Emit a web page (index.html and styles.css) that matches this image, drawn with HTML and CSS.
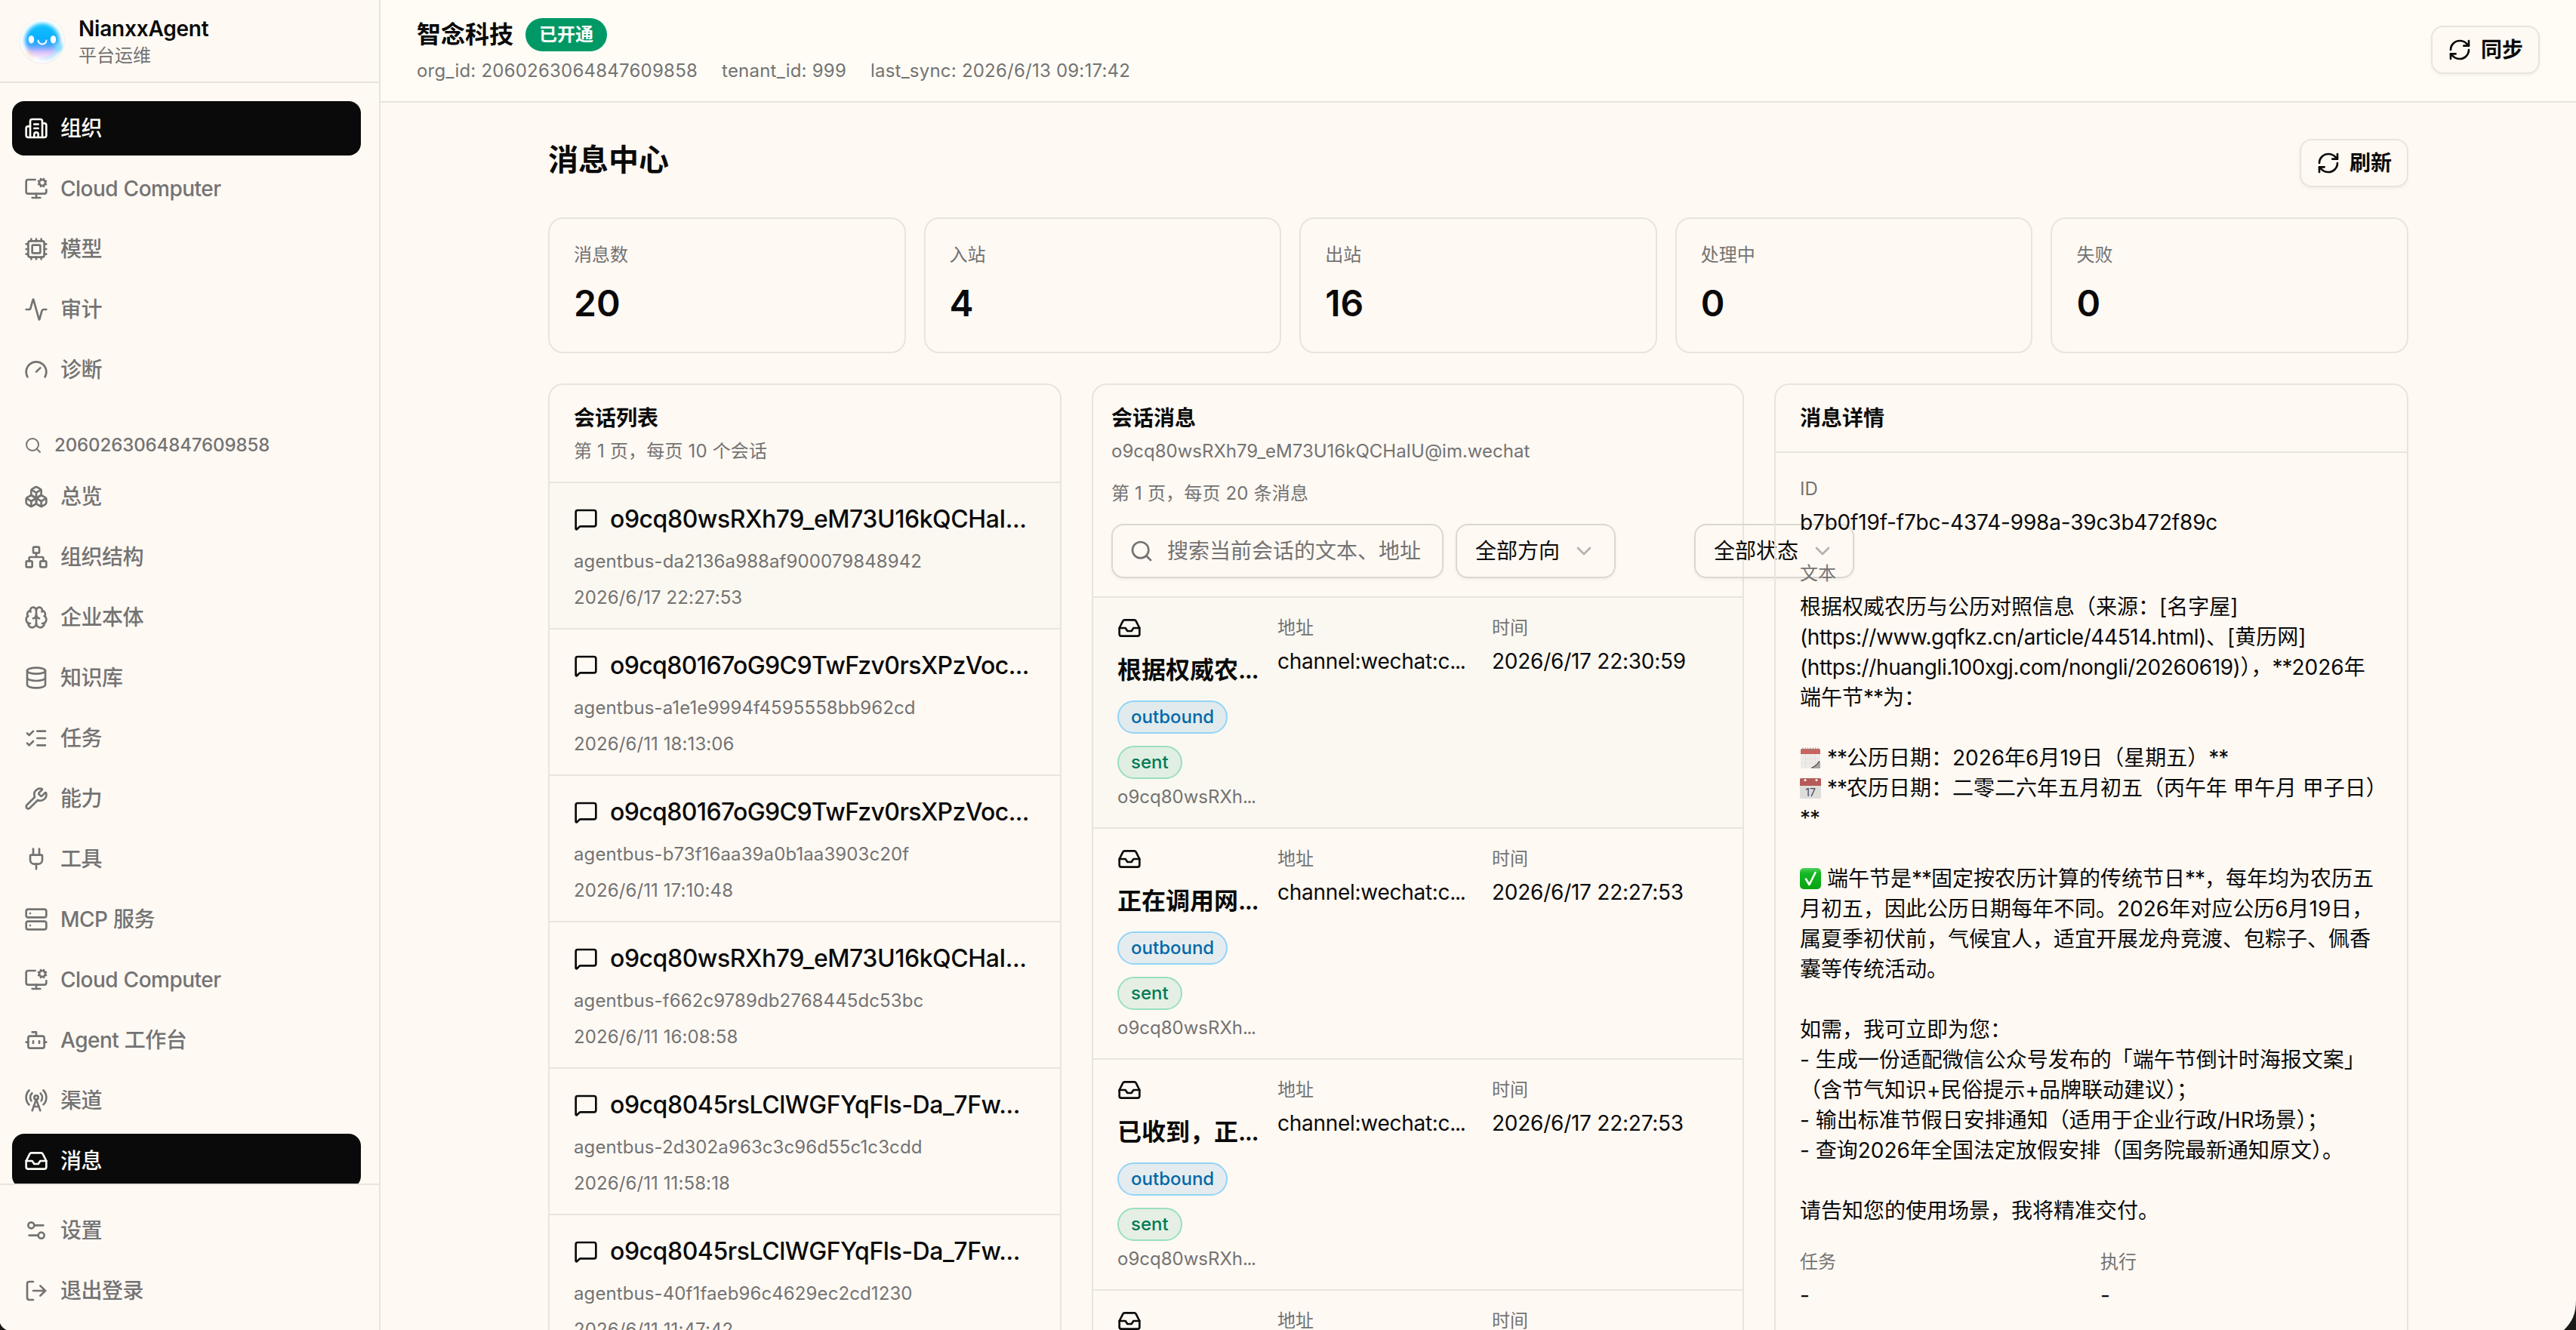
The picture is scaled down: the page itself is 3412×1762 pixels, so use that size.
FILE: index.html
```html
<!DOCTYPE html>
<html lang="zh-CN">
<head>
<meta charset="utf-8">
<title>NianxxAgent 平台运维</title>
<link rel="stylesheet" href="styles.css">
</head>
<body>
<svg class="sprite" aria-hidden="true">
  <symbol id="building" viewBox="0 0 24 24"><path d="M10 12h4M10 8h4M14 21v-3a2 2 0 0 0-4 0v3"/><path d="M6 10H4a2 2 0 0 0-2 2v7a2 2 0 0 0 2 2h16a2 2 0 0 0 2-2V9a2 2 0 0 0-2-2h-2"/><path d="M6 21V5a2 2 0 0 1 2-2h8a2 2 0 0 1 2 2v16"/></symbol>
  <symbol id="monitor" viewBox="0 0 24 24"><path d="M12 17v4"/><path d="m14.305 7.53.923-.382"/><path d="m15.228 4.852-.923-.383"/><path d="m16.852 3.228-.383-.924"/><path d="m16.852 8.772-.383.923"/><path d="m19.148 3.228.383-.924"/><path d="m19.53 9.696-.382-.924"/><path d="m20.772 4.852.924-.383"/><path d="m20.772 7.148.924.383"/><path d="M22 13v2a2 2 0 0 1-2 2H4a2 2 0 0 1-2-2V5a2 2 0 0 1 2-2h7"/><path d="M8 21h8"/><circle cx="18" cy="6" r="3"/></symbol>
  <symbol id="cpu" viewBox="0 0 24 24"><path d="M12 20v2M12 2v2M17 20v2M17 2v2M7 20v2M7 2v2M2 12h2M2 17h2M2 7h2M20 12h2M20 17h2M20 7h2"/><rect x="4" y="4" width="16" height="16" rx="2"/><rect x="8" y="8" width="8" height="8" rx="1"/></symbol>
  <symbol id="activity" viewBox="0 0 24 24"><path d="M22 12h-2.48a2 2 0 0 0-1.93 1.46l-2.35 8.36a.25.25 0 0 1-.48 0L9.24 2.18a.25.25 0 0 0-.48 0l-2.35 8.36A2 2 0 0 1 4.49 12H2"/></symbol>
  <symbol id="gauge" viewBox="0 0 24 24"><path d="m12 14 4-4"/><path d="M3.34 19a10 10 0 1 1 17.32 0"/></symbol>
  <symbol id="search" viewBox="0 0 24 24"><path d="m21 21-4.34-4.34"/><circle cx="11" cy="11" r="8"/></symbol>
  <symbol id="boxes" viewBox="0 0 24 24"><path d="M2.97 12.92A2 2 0 0 0 2 14.63v3.24a2 2 0 0 0 .97 1.71l3 1.8a2 2 0 0 0 2.06 0L12 19v-5.5l-5-3-4.03 2.42Z"/><path d="m7 16.5-4.74-2.85"/><path d="m7 16.5 5-3"/><path d="M7 16.5v5.17"/><path d="M12 13.5V19l3.97 2.38a2 2 0 0 0 2.06 0l3-1.8a2 2 0 0 0 .97-1.71v-3.24a2 2 0 0 0-.97-1.71L17 10.5l-5 3Z"/><path d="m17 16.5-5-3"/><path d="m17 16.5 4.74-2.85"/><path d="M17 16.5v5.17"/><path d="M7.97 4.42A2 2 0 0 0 7 6.13v4.37l5 3 5-3V6.13a2 2 0 0 0-.97-1.71l-3-1.8a2 2 0 0 0-2.06 0l-3 1.8Z"/><path d="M12 8 7.26 5.15"/><path d="m12 8 4.74-2.85"/><path d="M12 13.5V8"/></symbol>
  <symbol id="network" viewBox="0 0 24 24"><rect x="16" y="16" width="6" height="6" rx="1"/><rect x="2" y="16" width="6" height="6" rx="1"/><rect x="9" y="2" width="6" height="6" rx="1"/><path d="M5 16v-3a1 1 0 0 1 1-1h12a1 1 0 0 1 1 1v3"/><path d="M12 12V8"/></symbol>
  <symbol id="brain" viewBox="0 0 24 24"><path d="M12 18V5"/><path d="M15 13a4.17 4.17 0 0 1-3-4 4.17 4.17 0 0 1-3 4"/><path d="M17.598 6.5A3 3 0 1 0 12 5a3 3 0 1 0-5.598 1.5"/><path d="M17.997 5.125a4 4 0 0 1 2.526 5.77"/><path d="M18 18a4 4 0 0 0 2-7.464"/><path d="M19.967 17.483A4 4 0 1 1 12 18a4 4 0 1 1-7.967-.517"/><path d="M6 18a4 4 0 0 1-2-7.464"/><path d="M6.003 5.125a4 4 0 0 0-2.526 5.77"/></symbol>
  <symbol id="database" viewBox="0 0 24 24"><ellipse cx="12" cy="5" rx="9" ry="3"/><path d="M3 5V19A9 3 0 0 0 21 19V5"/><path d="M3 12A9 3 0 0 0 21 12"/></symbol>
  <symbol id="checks" viewBox="0 0 24 24"><path d="M13 5h8M13 12h8M13 19h8"/><path d="m3 17 2 2 4-4"/><path d="m3 7 2 2 4-4"/></symbol>
  <symbol id="wrench" viewBox="0 0 24 24"><path d="M14.7 6.3a1 1 0 0 0 0 1.4l1.6 1.6a1 1 0 0 0 1.4 0l3.106-3.105c.32-.322.863-.22.983.218a6 6 0 0 1-8.259 7.057l-7.91 7.91a1 1 0 0 1-2.999-3l7.91-7.91a6 6 0 0 1 7.057-8.259c.438.12.54.662.219.984z"/></symbol>
  <symbol id="plug" viewBox="0 0 24 24"><path d="M12 22v-5M15 8V2M9 8V2"/><path d="M17 8a1 1 0 0 1 1 1v4a4 4 0 0 1-4 4h-4a4 4 0 0 1-4-4V9a1 1 0 0 1 1-1z"/></symbol>
  <symbol id="server" viewBox="0 0 24 24"><rect x="2" y="2" width="20" height="8" rx="2"/><rect x="2" y="14" width="20" height="8" rx="2"/><path d="M6 6h.01M6 18h.01"/></symbol>
  <symbol id="bot" viewBox="0 0 24 24"><path d="M12 8V4H8"/><rect x="4" y="8" width="16" height="12" rx="2"/><path d="M2 14h2M20 14h2M15 13v2M9 13v2"/></symbol>
  <symbol id="tower" viewBox="0 0 24 24"><path d="M4.9 16.1C1 12.2 1 5.8 4.9 1.9"/><path d="M7.8 4.7a6.14 6.14 0 0 0-.8 7.5"/><circle cx="12" cy="9" r="2"/><path d="M16.2 4.8c2 2 2.26 5.11.8 7.47"/><path d="M19.1 1.9a9.96 9.96 0 0 1 0 14.1"/><path d="M9.5 18h5"/><path d="m8 22 4-11 4 11"/></symbol>
  <symbol id="inbox" viewBox="0 0 24 24"><path d="M22 12h-6l-2 3h-4l-2-3H2"/><path d="M5.45 5.11 2 12v6a2 2 0 0 0 2 2h16a2 2 0 0 0 2-2v-6l-3.45-6.89A2 2 0 0 0 16.76 4H7.24a2 2 0 0 0-1.79 1.11z"/></symbol>
  <symbol id="settings" viewBox="0 0 24 24"><path d="M14 17H5M19 7h-9"/><circle cx="17" cy="17" r="3"/><circle cx="7" cy="7" r="3"/></symbol>
  <symbol id="logout" viewBox="0 0 24 24"><path d="m16 17 5-5-5-5"/><path d="M21 12H9"/><path d="M9 21H5a2 2 0 0 1-2-2V5a2 2 0 0 1 2-2h4"/></symbol>
  <symbol id="refresh" viewBox="0 0 24 24"><path d="M3 12a9 9 0 0 1 9-9 9.75 9.75 0 0 1 6.74 2.74L21 8"/><path d="M21 3v5h-5"/><path d="M21 12a9 9 0 0 1-9 9 9.75 9.75 0 0 1-6.74-2.74L3 16"/><path d="M8 16H3v5"/></symbol>
  <symbol id="message" viewBox="0 0 24 24"><path d="M22 17a2 2 0 0 1-2 2H6.828a2 2 0 0 0-1.414.586l-2.202 2.202A.71.71 0 0 1 2 21.286V5a2 2 0 0 1 2-2h16a2 2 0 0 1 2 2z"/></symbol>
  <symbol id="chevron" viewBox="0 0 24 24"><path d="m6 9 6 6 6-6"/></symbol>
</svg>

<div class="app">
  <aside class="sidebar">
    <header class="brand">
      <svg class="logo" viewBox="0 0 64 64">
        <defs>
          <filter id="soft" x="-30%" y="-30%" width="160%" height="160%"><feGaussianBlur stdDeviation="2.6"/></filter>
          <linearGradient id="face" x1="0" y1="0" x2="0" y2="1">
            <stop offset="0" stop-color="#06c3ff"/><stop offset=".48" stop-color="#0bacff"/><stop offset=".66" stop-color="#4ba4ff"/><stop offset=".84" stop-color="#e6c3fb"/><stop offset="1" stop-color="#fbe9fb"/>
          </linearGradient>
          <clipPath id="disc"><circle cx="32" cy="32" r="29"/></clipPath>
        </defs>
        <circle cx="32" cy="32.4" r="30.4" fill="#f3f1ee"/>
        <circle cx="32" cy="32" r="29" fill="#fff"/>
        <g clip-path="url(#disc)">
          <g filter="url(#soft)">
            <circle cx="36" cy="36" r="21" fill="#a9e8ff"/>
            <circle cx="19" cy="46" r="8" fill="#fbe6c4"/>
            <circle cx="32" cy="32" r="23" fill="url(#face)"/>
            <circle cx="54" cy="41" r="6" fill="#7fdcff"/>
          </g>
        </g>
        <ellipse cx="17.500" cy="30.200" rx="3.700" ry="5.200" fill="#fff"/>
        <ellipse cx="46.500" cy="30.200" rx="3.700" ry="5.200" fill="#fff"/>
        <path d="M26.500 31.500a5.500 5 0 0 0 11 0" fill="none" stroke="#fff" stroke-width="2" stroke-linecap="round"/>
      </svg>
      <div>
        <div class="brand-name">NianxxAgent</div>
        <div class="brand-sub">平台运维</div>
      </div>
    </header>
    <div class="nav-scroll">
      <nav class="nav">
        <a class="nav-item active"><svg class="icon"><use href="#building"/></svg>组织</a>
        <a class="nav-item"><svg class="icon"><use href="#monitor"/></svg>Cloud Computer</a>
        <a class="nav-item"><svg class="icon"><use href="#cpu"/></svg>模型</a>
        <a class="nav-item"><svg class="icon"><use href="#activity"/></svg>审计</a>
        <a class="nav-item"><svg class="icon"><use href="#gauge"/></svg>诊断</a>
      </nav>
      <div class="nav-label"><svg class="icon small"><use href="#search"/></svg>2060263064847609858</div>
      <nav class="nav">
        <a class="nav-item"><svg class="icon"><use href="#boxes"/></svg>总览</a>
        <a class="nav-item"><svg class="icon"><use href="#network"/></svg>组织结构</a>
        <a class="nav-item"><svg class="icon"><use href="#brain"/></svg>企业本体</a>
        <a class="nav-item"><svg class="icon"><use href="#database"/></svg>知识库</a>
        <a class="nav-item"><svg class="icon"><use href="#checks"/></svg>任务</a>
        <a class="nav-item"><svg class="icon"><use href="#wrench"/></svg>能力</a>
        <a class="nav-item"><svg class="icon"><use href="#plug"/></svg>工具</a>
        <a class="nav-item"><svg class="icon"><use href="#server"/></svg>MCP 服务</a>
        <a class="nav-item"><svg class="icon"><use href="#monitor"/></svg>Cloud Computer</a>
        <a class="nav-item"><svg class="icon"><use href="#bot"/></svg>Agent 工作台</a>
        <a class="nav-item"><svg class="icon"><use href="#tower"/></svg>渠道</a>
        <a class="nav-item active"><svg class="icon"><use href="#inbox"/></svg>消息</a>
      </nav>
    </div>
    <footer class="nav side-foot">
      <a class="nav-item"><svg class="icon"><use href="#settings"/></svg>设置</a>
      <a class="nav-item"><svg class="icon"><use href="#logout"/></svg>退出登录</a>
    </footer>
  </aside>

  <div class="main">
    <header class="topbar">
      <div>
        <div class="org"><span class="org-name">智念科技</span><span class="status">已开通</span></div>
        <div class="meta"><span>org_id: 2060263064847609858</span><span>tenant_id: 999</span><span>last_sync: 2026/6/13 09:17:42</span></div>
      </div>
      <button class="btn"><svg class="icon"><use href="#refresh"/></svg>同步</button>
    </header>

    <main class="content">
      <div class="page-head">
        <h1>消息中心</h1>
        <button class="btn"><svg class="icon"><use href="#refresh"/></svg>刷新</button>
      </div>

      <section class="stats">
        <div class="stat"><div class="label">消息数</div><div class="value">20</div></div>
        <div class="stat"><div class="label">入站</div><div class="value">4</div></div>
        <div class="stat"><div class="label">出站</div><div class="value">16</div></div>
        <div class="stat"><div class="label">处理中</div><div class="value">0</div></div>
        <div class="stat"><div class="label">失败</div><div class="value">0</div></div>
      </section>

      <section class="columns">
        <div class="panel">
          <div class="panel-head">
            <h2>会话列表</h2>
            <div class="label loose">第 1 页，每页 10 个会话</div>
          </div>
          <div class="conv selected"><div class="conv-title"><svg class="icon"><use href="#message"/></svg><span>o9cq80wsRXh79_eM73U16kQCHaI...</span></div><div class="label id">agentbus-da2136a988af900079848942</div><div class="label id">2026/6/17 22:27:53</div></div>
          <div class="conv"><div class="conv-title tight"><svg class="icon"><use href="#message"/></svg><span>o9cq80167oG9C9TwFzv0rsXPzVoc...</span></div><div class="label id">agentbus-a1e1e9994f4595558bb962cd</div><div class="label id">2026/6/11 18:13:06</div></div>
          <div class="conv"><div class="conv-title tight"><svg class="icon"><use href="#message"/></svg><span>o9cq80167oG9C9TwFzv0rsXPzVoc...</span></div><div class="label id">agentbus-b73f16aa39a0b1aa3903c20f</div><div class="label id">2026/6/11 17:10:48</div></div>
          <div class="conv"><div class="conv-title"><svg class="icon"><use href="#message"/></svg><span>o9cq80wsRXh79_eM73U16kQCHaI...</span></div><div class="label id">agentbus-f662c9789db2768445dc53bc</div><div class="label id">2026/6/11 16:08:58</div></div>
          <div class="conv"><div class="conv-title"><svg class="icon"><use href="#message"/></svg><span>o9cq8045rsLClWGFYqFls-Da_7Fw...</span></div><div class="label id">agentbus-2d302a963c3c96d55c1c3cdd</div><div class="label id">2026/6/11 11:58:18</div></div>
          <div class="conv"><div class="conv-title"><svg class="icon"><use href="#message"/></svg><span>o9cq8045rsLClWGFYqFls-Da_7Fw...</span></div><div class="label id">agentbus-40f1faeb96c4629ec2cd1230</div><div class="label id">2026/6/11 11:47:42</div></div>
        </div>

        <div class="panel">
          <div class="panel-head filters">
            <h2>会话消息</h2>
            <div class="label">o9cq80wsRXh79_eM73U16kQCHaIU@im.wechat</div>
            <div class="label spaced loose">第 1 页，每页 20 条消息</div>
            <div class="controls">
              <div class="field search"><svg class="icon"><use href="#search"/></svg><span>搜索当前会话的文本、地址</span></div>
              <div class="field select">全部方向<svg class="icon"><use href="#chevron"/></svg></div>
              <div class="field select">全部状态<svg class="icon"><use href="#chevron"/></svg></div>
            </div>
          </div>
          <div class="msg selected">
            <div class="msg-main"><svg class="icon"><use href="#inbox"/></svg><div class="msg-title">根据权威农<span class="dots">...</span></div><span class="tag sky">outbound</span><span class="tag green">sent</span><div class="label">o9cq80wsRXh<span class="dots">...</span></div></div>
            <div><div class="label">地址</div><div class="text addr">channel:wechat:c<span class="dots">...</span></div></div>
            <div><div class="label">时间</div><div class="text time">2026/6/17 22:30:59</div></div>
          </div>
          <div class="msg">
            <div class="msg-main"><svg class="icon"><use href="#inbox"/></svg><div class="msg-title">正在调用网<span class="dots">...</span></div><span class="tag sky">outbound</span><span class="tag green">sent</span><div class="label">o9cq80wsRXh<span class="dots">...</span></div></div>
            <div><div class="label">地址</div><div class="text addr">channel:wechat:c<span class="dots">...</span></div></div>
            <div><div class="label">时间</div><div class="text time">2026/6/17 22:27:53</div></div>
          </div>
          <div class="msg">
            <div class="msg-main"><svg class="icon"><use href="#inbox"/></svg><div class="msg-title">已收到，正<span class="dots">...</span></div><span class="tag sky">outbound</span><span class="tag green">sent</span><div class="label">o9cq80wsRXh<span class="dots">...</span></div></div>
            <div><div class="label">地址</div><div class="text addr">channel:wechat:c<span class="dots">...</span></div></div>
            <div><div class="label">时间</div><div class="text time">2026/6/17 22:27:53</div></div>
          </div>
          <div class="msg">
            <div class="msg-main"><svg class="icon"><use href="#inbox"/></svg></div>
            <div><div class="label">地址</div></div>
            <div><div class="label">时间</div></div>
          </div>
        </div>

        <div class="panel">
          <div class="panel-head"><h2>消息详情</h2></div>
          <div class="detail">
            <div><div class="label">ID</div><div class="text uuid">b7b0f19f-f7bc-4374-998a-39c3b472f89c</div></div>
            <div>
              <div class="label">文本</div>
              <div class="text body">根据权威农历与公历对照信息（来源：[名字屋]
<span class="url">(https://www.gqfkz.cn/article/44514.html)</span>、[黄历网]
<span class="url">(https://huangli.100xgj.com/nongli/20260619)</span>），<b>**</b>2026年
端午节<b>**</b>为：

<svg class="emoji" viewBox="0 0 28 28"><rect x="1" y="2" width="26" height="26" rx="1.500" fill="#eeece9"/><path d="M1 3.500A1.500 1.500 0 0 1 2.500 2h23A1.500 1.500 0 0 1 27 3.500V9H1z" fill="#c96460"/><path d="M4 .5v4M7.300.5v4M10.700.5v4M14 .5v4M17.300.5v4M20.700.5v4M24 .5v4" stroke="#8d8884" stroke-width="1"/><path d="M1 15h26M1 21h26M7.500 9v19M14 9v19M20.500 9v19" stroke="#dddad7" stroke-width=".6"/><path d="M16 28c3-2 7-5 9.500-9.500L27 18v10z" fill="#a7a4a2"/><path d="M15.500 27.500c4-2 8-5 10-9" stroke="#55524f" stroke-width="1.400" fill="none"/></svg> <b>**</b>公历日期：2026年6月19日（星期五）<b>**</b>
<svg class="emoji" viewBox="0 0 28 28"><rect y="1" width="28" height="27" rx="1.500" fill="#dfdddc"/><path d="M0 2.500A1.500 1.500 0 0 1 1.500 1h25A1.500 1.500 0 0 1 28 2.500V11H0z" fill="#b55a58"/><circle cx="7" cy="3.500" r="1.500" fill="#fff"/><circle cx="22" cy="3.500" r="1.500" fill="#fff"/><text x="14" y="24.500" text-anchor="middle" font-size="14" fill="#4a4846">17</text></svg> <b>**</b>农历日期：二零二六年五月初五（丙午年 甲午月 甲子日）
<b>**</b>

<svg class="emoji" viewBox="0 0 28 28"><defs><linearGradient id="ok" x1="0" y1="0" x2="0" y2="1"><stop offset="0" stop-color="#4fd05a"/><stop offset=".25" stop-color="#14b824"/><stop offset="1" stop-color="#07a312"/></linearGradient></defs><rect width="28" height="28" rx="5" fill="url(#ok)"/><path d="M8 14.500 12.500 22 20.500 6" fill="none" stroke="#fff" stroke-width="2.600" stroke-linecap="round" stroke-linejoin="round"/></svg> 端午节是<b>**</b>固定按农历计算的传统节日<b>**</b>，每年均为农历五
月初五，因此公历日期每年不同。2026年对应公历6月19日，
属夏季初伏前，气候宜人，适宜开展龙舟竞渡、包粽子、佩香
囊等传统活动。

如需，我可立即为您：
- 生成一份适配微信公众号发布的「端午节倒计时海报文案」
（含节气知识+民俗提示+品牌联动建议）；
- 输出标准节假日安排通知（适用于企业行政/HR场景）；
- 查询2026年全国法定放假安排（国务院最新通知原文）。

请告知您的使用场景，我将精准交付。</div>
            </div>
            <div class="pair">
              <div><div class="label">任务</div><div class="text">-</div></div>
              <div><div class="label">执行</div><div class="text">-</div></div>
            </div>
          </div>
        </div>
      </section>
    </main>
  </div>
</div>
<svg class="corner left" viewBox="0 0 10 10"><path d="M0 1C1.500 5 4.500 8 8.500 10H0z"/></svg>
<svg class="corner right" viewBox="0 0 40 40"><path d="M40 0C40 19 35 29 24 40H40z"/></svg>
</body>
</html>
```

FILE: styles.css
```css
* { box-sizing: border-box; }

:root {
  --bg: #fff9f3;
  --bg-top: #fffcf5;
  --selected: #fbf8f1;
  --fg: #0a0a0a;
  --muted: #737373;
  --border: #e8e4de;
  --input: #dbd7d1;
}

body {
  margin: 0;
  height: 1762px;
  overflow: hidden;
  background: var(--bg);
  color: var(--fg);
  font-family: Inter, "Noto Sans CJK SC", sans-serif;
  font-size: 28px;
  line-height: 40px;
}

h1, h2 { margin: 0; font-weight: 600; }

.sprite { display: none; }

.icon {
  flex: none;
  display: block;
  width: 32px;
  height: 32px;
  fill: none;
  stroke: currentColor;
  stroke-width: 2;
  stroke-linecap: round;
  stroke-linejoin: round;
}
.icon.small { width: 24px; height: 24px; }

.app { display: flex; height: 1762px; overflow: hidden; }

/* Sidebar */
.sidebar {
  flex: none;
  display: flex;
  flex-direction: column;
  width: 504px;
  border-right: 2px solid var(--border);
}
.brand {
  flex: none;
  display: flex;
  align-items: center;
  gap: 16px;
  height: 110px;
  padding-left: 24px;
  border-bottom: 2px solid var(--border);
}
.logo { width: 64px; height: 64px; }
.brand-name { font-weight: 600; letter-spacing: -.2px; }
.brand-sub { font-size: 24px; line-height: 32px; color: var(--muted); }

.nav-scroll { flex: 1; min-height: 0; overflow: hidden; padding-top: 24px; }
.nav { display: flex; flex-direction: column; gap: 8px; padding: 0 24px 0 16px; }
.nav-item {
  display: flex;
  align-items: center;
  gap: 16px;
  height: 72px;
  padding-left: 16px;
  border-radius: 16px;
  color: var(--muted);
  font-weight: 500;
  letter-spacing: -.5px;
}
.nav-item:lang(zh) { word-spacing: .5px; }
.nav-item.active { background: var(--fg); color: #fffdf6; }
.nav-label {
  display: flex;
  align-items: center;
  gap: 16px;
  margin: 48px 0 16px;
  padding-left: 32px;
  font-size: 24px;
  line-height: 32px;
  font-weight: 500;
  letter-spacing: -.1px;
  color: var(--muted);
}
.side-foot { flex: none; padding-top: 24px; padding-bottom: 16px; border-top: 2px solid var(--border); }

/* Top bar */
.main { flex: 1; min-width: 0; display: flex; flex-direction: column; }
.topbar {
  flex: none;
  display: flex;
  justify-content: space-between;
  align-items: flex-start;
  height: 136px;
  padding: 22px 48px 0;
  background: var(--bg-top);
  border-bottom: 2px solid var(--border);
}
.topbar .btn { margin-top: 12px; }
.org { display: flex; align-items: center; gap: 16px; height: 48px; }
.org-name { font-size: 32px; font-weight: 600; }
.status {
  height: 44px;
  padding: 0 18px;
  border-radius: 22px;
  background: #009966;
  color: #fff;
  font-size: 24px;
  line-height: 44px;
  font-weight: 600;
}
.meta { display: flex; gap: 32px; margin-top: 8px; font-size: 24px; line-height: 32px; letter-spacing: .22px; color: var(--muted); }

.btn {
  display: flex;
  align-items: center;
  gap: 12px;
  height: 64px;
  padding: 0 20px;
  border: 2px solid var(--border);
  border-radius: 16px;
  background: var(--bg);
  box-shadow: 0 2px 4px rgba(0, 0, 0, .05);
  color: var(--fg);
  font: inherit;
  font-weight: 600;
}

/* Page */
.content { flex: 1; min-height: 0; width: 2464px; margin-left: 222px; padding-top: 48px; overflow: hidden; }
.page-head { display: flex; justify-content: space-between; }
h1 { font-size: 40px; line-height: 56px; }

.label { font-size: 24px; line-height: 32px; color: var(--muted); white-space: nowrap; }
.label.id { letter-spacing: .1px; }
.label.loose { letter-spacing: .17px; }
.text { margin-top: 8px; white-space: nowrap; }
.addr { letter-spacing: -.28px; }
.time { letter-spacing: -.25px; }
.uuid { letter-spacing: -.18px; }
.url { letter-spacing: -.4px; }
.dots { letter-spacing: -1.4px; }

.stats { display: grid; grid-template-columns: repeat(5, 1fr); gap: 24px; margin: 40px 0; }
.stat { height: 180px; padding: 32px; border: 2px solid var(--border); border-radius: 20px; }
.value { margin-top: 16px; font-size: 48px; line-height: 64px; font-weight: 600; }

.columns { display: grid; grid-template-columns: 680px 864px 840px; gap: 40px; align-items: start; }
.panel { height: 1400px; border: 2px solid var(--border); border-radius: 20px; }
.panel-head { padding: 24px 32px; border-bottom: 2px solid var(--border); }
.panel-head.filters { padding: 24px; }
h2 { font-size: 28px; line-height: 40px; }
.panel-head .label { margin-top: 8px; }
.panel-head .label.spaced { margin-top: 24px; }

.conv {
  display: flex;
  flex-direction: column;
  gap: 16px;
  height: 194px;
  padding: 24px 32px;
  border-bottom: 2px solid var(--border);
}
.selected { background: var(--selected); }
.conv-title {
  display: flex;
  align-items: center;
  gap: 16px;
  height: 48px;
  font-size: 32px;
  font-weight: 500;
  letter-spacing: -.45px;
  white-space: nowrap;
}
.conv-title.tight { letter-spacing: -.62px; }

.controls { display: grid; grid-template-columns: 440px 300px 300px; gap: 16px; margin-top: 24px; }
.field {
  display: flex;
  align-items: center;
  gap: 16px;
  height: 72px;
  border: 2px solid var(--input);
  border-radius: 16px;
  box-shadow: 0 2px 4px rgba(0, 0, 0, .05);
  white-space: nowrap;
}
.search { gap: 18px; padding: 0 22px; color: var(--muted); }
.select { justify-self: start; width: 212px; padding: 0 24px; }
.select .icon { color: #b5b1ad; }

.msg {
  display: grid;
  grid-template-columns: 188px 260px 300px;
  gap: 24px;
  height: 306px;
  padding: 24px 32px;
  border-bottom: 2px solid var(--border);
}
.msg-main { display: flex; flex-direction: column; align-items: flex-start; gap: 16px; }
.msg-title { font-size: 32px; line-height: 48px; font-weight: 600; white-space: nowrap; }
.msg-main .label { margin-top: -8px; }
.tag {
  height: 44px;
  padding: 0 16px;
  border: 2px solid;
  border-radius: 22px;
  font-size: 24px;
  line-height: 40px;
  font-weight: 500;
}
.sky { color: #0069a8; background: rgba(0, 132, 209, .1); border-color: #92d4f6; }
.green { color: #007a55; background: rgba(0, 153, 102, .1); border-color: #99dfbe; }

.detail { display: flex; flex-direction: column; gap: 32px; padding: 32px; }
.body { white-space: pre; }
.body b { font-weight: 400; letter-spacing: -1px; }
.emoji { width: 28px; height: 28px; vertical-align: -4px; }
.pair { display: grid; grid-template-columns: 1fr 1fr; gap: 24px; }

/* Rounded window corners */
.corner { position: absolute; fill: #1a1b18; }
.corner.left { left: 0; top: 1752px; width: 10px; height: 10px; }
.corner.right { left: 3372px; top: 1722px; width: 40px; height: 40px; }
```
